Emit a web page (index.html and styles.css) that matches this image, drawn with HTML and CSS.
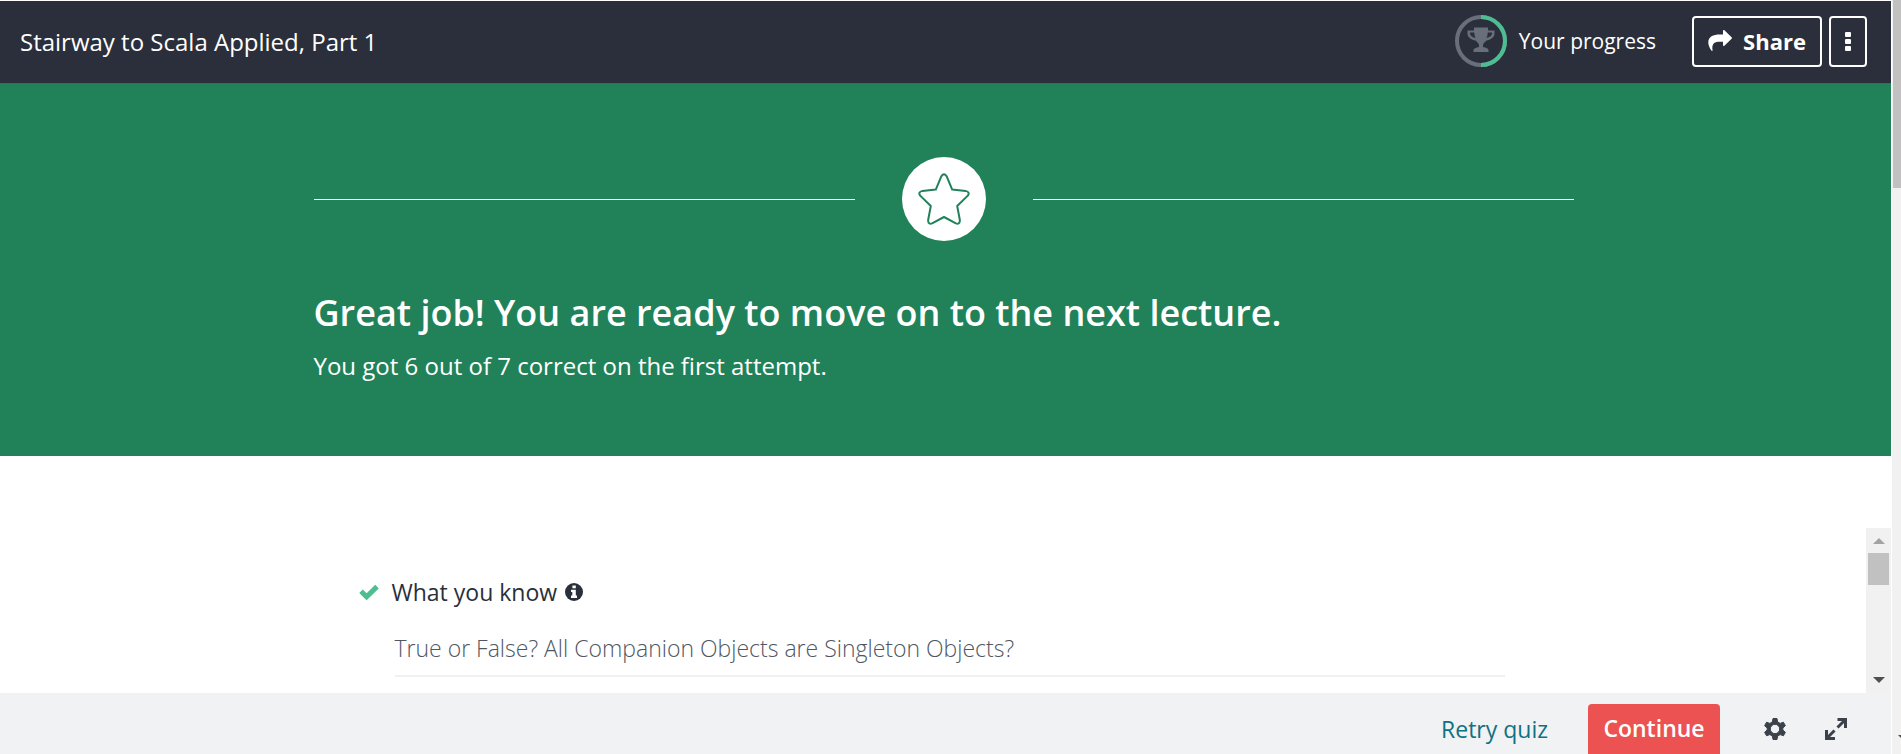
FILE: index.html
```html
<!DOCTYPE html>
<html lang="en">
<head>
<meta charset="utf-8">
<title>Stairway to Scala Applied, Part 1</title>
<link rel="stylesheet" href="styles.css">
</head>
<body>
<div class="app">
  <header class="topbar">
    <span class="course-title">Stairway to Scala Applied, Part 1</span>
    <button class="progress" type="button">
      <svg class="progress-ring" viewBox="0 0 52 52" aria-hidden="true">
        <circle cx="26" cy="26" r="24" fill="none" stroke="#686f7a" stroke-width="4"/>
        <path d="M26 2a24 24 0 0 1 0 48" fill="none" stroke="#4dbd92" stroke-width="4"/>
        <path fill="#686f7a" d="M19 12.500h14v3h6.500v3c0 4-4 6.500-8 7-1.500 2-3.500 2.500-3.500 5v1.500c3 .5 5.500 1.500 5.500 3v2h-15v-2c0-1.500 2.500-2.500 5.500-3v-1.500c0-2.500-2-3-3.500-5-4-.5-8-3-8-7v-3h6.500z"/>
        <path fill="#2b2f3b" d="M15 17.500h4.200c.1 2 .5 3.800 1.200 5.400-3-.7-5.400-2.500-5.400-4.500zM37 17.500h-4.200c-.1 2-.5 3.800-1.200 5.400 3-.7 5.400-2.500 5.400-4.500z"/>
      </svg>
      Your progress
    </button>
    <button class="outline-btn share" type="button">
      <svg class="share-icon" viewBox="0 0 24 22" aria-hidden="true"><path fill="#fff" d="M15 .8c0-.8.8-1 1.400-.5l7.200 7c.5.500.5 1 0 1.500l-7.200 7c-.6.500-1.400.2-1.400-.5v-3.600h-3c-6 0-8.300 2-7.500 8.700 0 .6-.5.8-.9.300C1.500 18 .3 15.200.3 12.500.3 6.500 5 4.400 12 4.400h3z"/></svg>
      Share
    </button>
    <button class="outline-btn more" type="button" aria-label="More options">
      <svg class="more-icon" viewBox="0 0 6 19" aria-hidden="true"><g fill="#fff"><rect width="6" height="5" rx="1"/><rect y="7" width="6" height="5" rx="1"/><rect y="14" width="6" height="5" rx="1"/></g></svg>
    </button>
  </header>

  <section class="banner">
    <div class="banner-inner">
      <div class="divider">
        <span class="badge"><svg class="star" viewBox="0 0 52 52" aria-hidden="true"><path fill="none" stroke="#21825a" stroke-width="2" stroke-linejoin="round" d="M23.400 3.200Q26 -.8 28.600 3.200L34.200 16.600L47.600 17.900Q52.300 19 49.800 22.600L39.200 33L41.900 47.300Q41.800 51.800 37.900 50.400L26 44L14.100 50.400Q10.200 51.800 10.100 47.300L12.800 33L2.200 22.600Q-.3 19 4.400 17.900L17.800 16.600Z"/></svg></span>
      </div>
      <h1 class="headline">Great job! You are ready to move on to the next lecture.</h1>
      <p class="score">You got 6 out of 7 correct on the first attempt.</p>
    </div>
  </section>

  <main class="results">
    <div class="results-inner">
      <h2 class="group-title">
        <svg class="check" viewBox="0 0 20 16" aria-hidden="true"><path d="M2 7.200L7.600 12.800L18 2.600" fill="none" stroke="#4dbd92" stroke-width="5"/></svg>
        What you know
        <svg class="info" viewBox="0 0 18 18" aria-hidden="true"><circle cx="9" cy="9" r="9" fill="#29303b"/><path fill="#fff" d="M7.400 2.500h3.400v2.700H7.400zM6 6.700h4.800v5.900H12v2.300H6v-2.300h1.300V9H6z"/></svg>
      </h2>
      <p class="question">True or False? All Companion Objects are Singleton Objects?</p>
    </div>
    <div class="scroll-track" aria-hidden="true">
      <svg class="arrow" viewBox="0 0 12 6"><path fill="#a3a3a3" d="M0 6L6 0l6 6z"/></svg>
      <span class="scroll-thumb"></span>
      <svg class="arrow arrow-end" viewBox="0 0 12 6"><path fill="#505050" d="M0 0l6 6 6-6z"/></svg>
    </div>
  </main>

  <footer class="footer">
    <button class="retry" type="button">Retry quiz</button>
    <button class="continue" type="button">Continue</button>
    <button class="icon-btn settings" type="button" aria-label="Settings">
      <svg class="footer-icon" viewBox="0 0 24 24" aria-hidden="true"><path fill="#3c424c" stroke="#3c424c" stroke-linejoin="round" fill-rule="evenodd" d="M10 1.500h4l.6 3.400 2.600 1.500 3.200-1.200 2 3.500L19.800 11v2l2.600 2.300-2 3.500-3.200-1.200-2.600 1.500-.6 3.400h-4l-.6-3.400-2.600-1.500-3.200 1.200-2-3.500L4.200 13v-2L1.600 8.700l2-3.500 3.200 1.200 2.600-1.500zM12 7.300a4.700 4.700 0 1 0 0 9.400 4.700 4.700 0 0 0 0-9.400z"/></svg>
    </button>
    <button class="icon-btn" type="button" aria-label="Full screen">
      <svg class="footer-icon" viewBox="0 0 24 24" aria-hidden="true"><path fill="none" stroke="#3c424c" stroke-width="3" d="M13.500 2.500h8V11M21 3l-7.500 7.500M10.500 13.500L3 21M2.500 13v8.500H11"/></svg>
    </button>
  </footer>
</div>
<div class="page-scroll" aria-hidden="true">
  <span class="page-thumb"></span>
  <svg class="page-arrow" viewBox="0 0 12 6"><path fill="#505050" d="M0 0l6 6 6-6z"/></svg>
</div>
</body>
</html>
```
FILE: styles.css
```css
* {
  box-sizing: border-box;
}

body {
  margin: 0;
  display: flex;
  height: 100vh;
  overflow: hidden;
  background: #fff;
  font-family: "Open Sans", "Noto Sans", sans-serif;
  font-size: 24px;
  color: #29303b;
}

h1, h2, p {
  margin: 0;
}

button {
  font: inherit;
  color: inherit;
  background: none;
  border: 0;
  padding: 0;
  cursor: pointer;
}

svg {
  display: block;
  flex: none;
}

.app {
  flex: 1;
  min-width: 0;
  display: flex;
  flex-direction: column;
  padding-top: 1px;
}

.topbar {
  flex: none;
  display: flex;
  align-items: center;
  height: 83px;
  padding: 0 24px 2px 20px;
  background: #2b2f3b;
  border-bottom: 1px solid #476460;
  color: #fff;
}

.course-title {
  margin-right: auto;
}

.progress {
  display: flex;
  align-items: center;
  gap: 12px;
  margin-right: 36px;
  font-size: 21px;
}

.progress-ring {
  width: 52px;
  height: 52px;
}

.outline-btn {
  display: flex;
  align-items: center;
  justify-content: center;
  height: 51px;
  border: 2px solid #fff;
  border-radius: 4px;
}

.share {
  gap: 11px;
  width: 130px;
  margin-right: 7px;
  font-size: 22px;
  font-weight: 700;
}

.share-icon {
  width: 24px;
  height: 22px;
}

.more {
  width: 38px;
}

.more-icon {
  width: 6px;
  height: 19px;
}

.banner {
  flex: none;
  display: flex;
  justify-content: center;
  padding: 73px 36px 72px 32px;
  background: #21825a;
  color: #fff;
}

.banner-inner {
  width: 100%;
  max-width: 1260px;
}

.divider {
  display: flex;
  align-items: center;
  gap: 47px;
}

.divider::before,
.divider::after {
  content: "";
  flex: 1;
  height: 1px;
  background: #fff;
}

.badge {
  display: grid;
  place-items: center;
  width: 84px;
  height: 84px;
  border-radius: 50%;
  background: #fff;
}

.star {
  width: 52px;
  height: 52px;
}

.headline {
  margin-top: 44px;
  font-size: 36px;
  line-height: 56px;
  font-weight: 600;
}

.score {
  margin-top: 7px;
  line-height: 36px;
}

.results {
  flex: 1;
  min-height: 0;
  display: flex;
  justify-content: center;
  position: relative;
  overflow: hidden;
}

.results-inner {
  width: 100%;
  max-width: 1174px;
  padding: 118px 28px 0 0;
}

.group-title {
  display: flex;
  align-items: center;
  font-size: 23px;
  line-height: 36px;
  font-weight: 500;
}

.check {
  width: 20px;
  height: 16px;
  margin-right: 13px;
}

.info {
  width: 18px;
  height: 18px;
  margin-left: 8px;
}

.question {
  margin: 20px 0 0 36px;
  padding-bottom: 9px;
  font-size: 23px;
  line-height: 36px;
  font-weight: 350;
  color: #505763;
  border-bottom: 2px solid #f0f1f2;
}

.scroll-track {
  position: absolute;
  top: 72px;
  right: 0;
  bottom: 0;
  width: 25px;
  display: flex;
  flex-direction: column;
  align-items: center;
  padding: 10px 0;
  background: #f1f1f1;
}

.arrow {
  width: 12px;
  height: 6px;
}

.arrow-end {
  margin-top: auto;
}

.scroll-thumb {
  width: 21px;
  height: 32px;
  margin-top: 9px;
  background: #c1c1c1;
}

.footer {
  flex: none;
  display: flex;
  align-items: center;
  justify-content: flex-end;
  height: 61px;
  padding: 11px 43px 0 20px;
  background: #f0f2f4;
  font-size: 23px;
}

.retry {
  color: #0f7183;
  font-weight: 500;
}

.continue {
  width: 132px;
  height: 50px;
  margin: 0 43px 0 40px;
  padding-bottom: 2px;
  border-radius: 4px 4px 0 0;
  background: #ec5252;
  color: #fff;
  font-weight: 600;
}

.settings {
  margin-right: 37px;
}

.footer-icon {
  width: 24px;
  height: 24px;
}

.page-scroll {
  flex: none;
  display: flex;
  flex-direction: column;
  justify-content: space-between;
  width: 10px;
  padding-bottom: 13px;
  border-left: 1px solid #fff;
  background: #f1f1f1;
  overflow: hidden;
}

.page-thumb {
  height: 188px;
  margin-left: 1px;
  background: #c1c1c1;
}

.page-arrow {
  width: 12px;
  height: 6px;
  margin-left: 6px;
}
```
